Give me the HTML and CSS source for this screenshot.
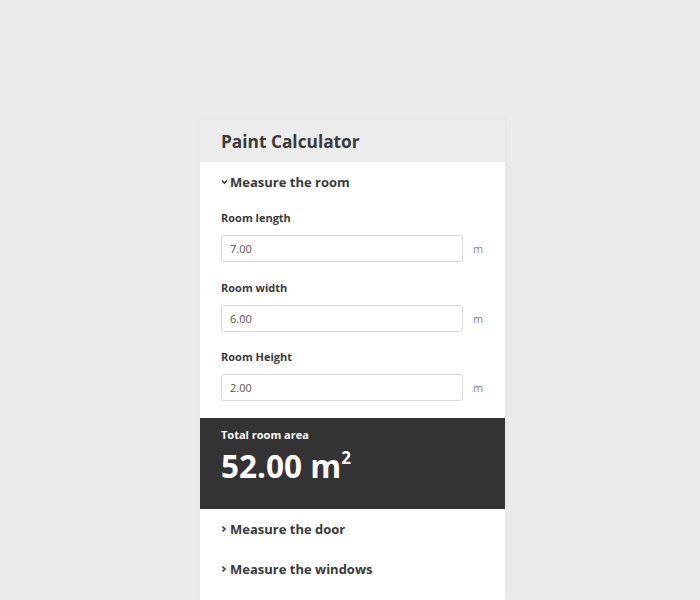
FILE: index.html
```html
<!DOCTYPE html>
<html>
<head>
<meta charset="utf-8">
<link rel="stylesheet" href="styles.css">
</head>
<body>
<div class="card">
  <div class="header"><h1>Paint Calculator</h1></div>
  <div class="section open">
    <div class="toggle"><svg class="chev" width="9" height="8" viewBox="0 0 9 8"><path d="M1 2.5 L3.5 5 L6 2.5" fill="none" stroke="#3a3a3a" stroke-width="1.6"/></svg>Measure the room</div>
    <div class="field">
      <label>Room length</label>
      <div class="row"><div class="input">7.00</div><span class="unit">m</span></div>
    </div>
    <div class="field">
      <label>Room width</label>
      <div class="row"><div class="input">6.00</div><span class="unit">m</span></div>
    </div>
    <div class="field">
      <label>Room Height</label>
      <div class="row"><div class="input">2.00</div><span class="unit">m</span></div>
    </div>
  </div>
  <div class="total">
    <div class="total-label">Total room area</div>
    <div class="total-value">52.00 m<sup>2</sup></div>
  </div>
  <div class="toggle closed"><svg class="chev" width="9" height="8" viewBox="0 0 9 8"><path d="M1.5 1.5 L4 4 L1.5 6.5" fill="none" stroke="#3a3a3a" stroke-width="1.6"/></svg>Measure the door</div>
  <div class="toggle closed"><svg class="chev" width="9" height="8" viewBox="0 0 9 8"><path d="M1.5 1.5 L4 4 L1.5 6.5" fill="none" stroke="#3a3a3a" stroke-width="1.6"/></svg>Measure the windows</div>
</div>
</body>
</html>
```
FILE: styles.css
```css
html, body {
  margin: 0;
  padding: 0;
  background: #ebebeb;
  font-family: "Open Sans", "Liberation Sans", sans-serif;
  color: #3a3a3a;
}
body {
  padding: 120px 0 0 200px;
  height: 600px;
  box-sizing: border-box;
  overflow: hidden;
}
.card {
  width: 305px;
  background: #fff;
  box-shadow: 0 0 8px rgba(0,0,0,0.04);
  height: 480px;
}
.header {
  background: #ececec;
  height: 42px;
  padding-left: 21px;
  display: flex;
  align-items: center;
}
.header h1 {
  margin: 0;
  font-size: 17.3px;
  font-weight: 700;
  color: #3a3a3a;
}
.section.open {
  padding: 0 0 17px 0;
}
.toggle {
  font-size: 13px;
  font-weight: 700;
  padding-left: 21px;
  height: 40px;
  display: flex;
  align-items: center;
  color: #3a3a3a;
}
.chev {
  display: block;
  flex: none;
}
.field {
  padding-left: 21px;
  margin-top: 8px;
}
.field + .field {
  margin-top: 17.5px;
}
.field label {
  display: block;
  font-size: 11px;
  font-weight: 700;
  color: #3a3a3a;
  height: 16px;
  line-height: 16px;
  margin-bottom: 9px;
}
.row {
  display: flex;
  align-items: center;
}
.input {
  width: 242px;
  height: 27px;
  box-sizing: border-box;
  border: 1px solid #d9d9d9;
  border-radius: 3px;
  font-size: 11px;
  padding-left: 8px;
  display: flex;
  align-items: center;
  color: #555;
}
.unit {
  margin-left: 10px;
  font-size: 11px;
  color: #888;
}
.total {
  background: #333333;
  color: #fff;
  height: 91px;
  padding: 10px 21px 0;
  box-sizing: border-box;
}
.total-label {
  font-size: 11px;
  font-weight: 700;
  line-height: 14px;
}
.total-value {
  font-size: 31.5px;
  font-weight: 700;
  line-height: 40px;
  margin-top: 4px;
}
.total-value sup {
  font-size: 17px;
  vertical-align: top;
  line-height: 1;
  position: relative;
  top: 3px;
}
.toggle.closed {
  height: 40px;
}
```
